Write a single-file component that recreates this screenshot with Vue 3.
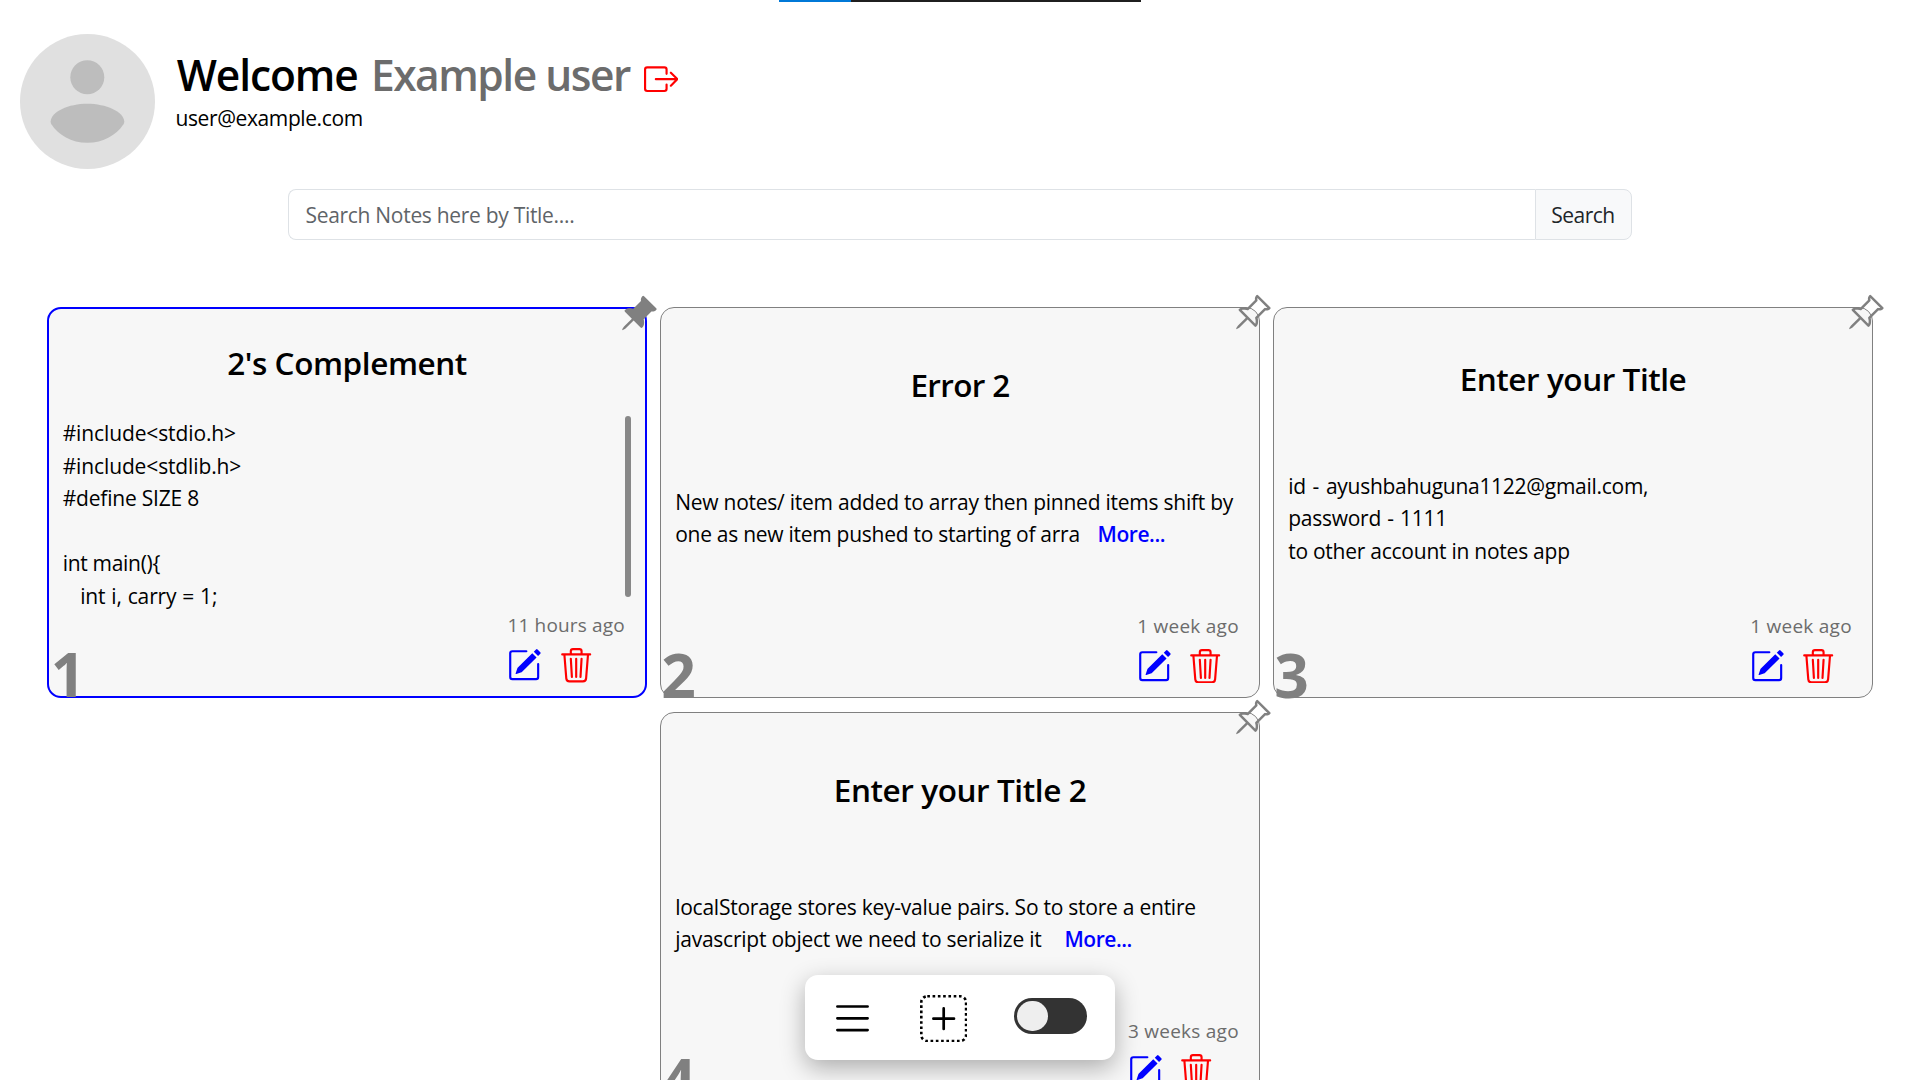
<script setup>
const notes = [
  {
    id: 1, title: "2's Complement", titleTrack: -0.42, pinned: true, date: '11 hours ago',
    lines: [
      { text: '#include<stdio.h>', track: -0.12 },
      { text: '#include<stdlib.h>', track: -0.13 },
      { text: '#define SIZE 8', track: -0.2 },
      { text: ' ', track: 0 },
      { text: 'int main(){', track: -0.3 },
      { text: '   int i, carry = 1;', track: -0.12, space: 0.5 },
    ],
  },
  {
    id: 2, title: 'Error 2', titleTrack: -0.65, pinned: false, date: '1 week ago',
    lines: [
      { text: 'New notes/ item added to array then pinned items shift by', track: -0.243 },
      { text: 'one as new item pushed to starting of arra', track: -0.27, more: true },
    ],
  },
  {
    id: 3, title: 'Enter your Title', titleTrack: -0.45, pinned: false, date: '1 week ago',
    lines: [
      { text: 'id - ayushbahuguna1122@gmail.com,', track: -0.28, space: 1.7 },
      { text: 'password - 1111', track: -0.25, space: 1 },
      { text: 'to other account in notes app', track: -0.247 },
    ],
  },
  {
    id: 4, title: 'Enter your Title 2', titleTrack: -0.42, pinned: false, date: '3 weeks ago',
    lines: [
      { text: 'localStorage stores key-value pairs. So to store a entire', track: -0.245 },
      { text: 'javascript object we need to serialize it ', track: -0.24, more: true },
    ],
  },
]
</script>

<template>
  <div class="page">
    <div class="loader"><span class="loader-done"></span></div>

    <header class="header">
      <svg class="avatar" viewBox="0 0 135 135">
        <circle cx="67.5" cy="67.5" r="67.5" fill="#e0e0e0" />
        <circle cx="67.3" cy="43.2" r="17" fill="#bdbdbd" />
        <path fill="#bdbdbd" d="M30.6 87.6C31.2 77.5 48.5 69.7 67.3 69.7s36.4 7.8 37 17.9c0 1-.3 1.8-.8 2.6C96.3 101 83.5 108.7 67.3 108.7S38.5 101 31.400 90.200c-.5-.8-.8-1.6-.8-2.6z" />
      </svg>
      <div class="who">
        <h1 class="greeting">
          <span class="hello">Welcome</span>
          <span class="name">Example user</span>
          <svg class="logout" viewBox="0 0 16 16" fill="currentColor">
            <path fill-rule="evenodd" d="M10 12.5a.5.5 0 0 1-.5.5h-8a.5.5 0 0 1-.5-.5v-9a.5.5 0 0 1 .5-.5h8a.5.5 0 0 1 .5.5v2a.5.5 0 0 0 1 0v-2A1.5 1.5 0 0 0 9.5 2h-8A1.5 1.5 0 0 0 0 3.5v9A1.5 1.5 0 0 0 1.5 14h8a1.5 1.5 0 0 0 1.5-1.5v-2a.5.5 0 0 0-1 0z" />
            <path fill-rule="evenodd" d="M15.854 8.354a.5.5 0 0 0 0-.708l-3-3a.5.5 0 0 0-.708.708L14.293 7.5H5.5a.5.5 0 0 0 0 1h8.793l-2.147 2.146a.5.5 0 0 0 .708.708z" />
          </svg>
        </h1>
        <p class="email">user@example.com</p>
      </div>
    </header>

    <form class="search" @submit.prevent>
      <input class="search-input" type="text" placeholder="Search Notes here by Title...." />
      <button class="search-button" type="submit">Search</button>
    </form>

    <main class="notes">
      <article v-for="n in notes" :key="n.id" class="card" :class="['card-' + n.id, { pinned: n.pinned }]">
        <svg class="pin" viewBox="0 0 16 16" fill="currentColor">
          <path v-if="n.pinned" d="M9.828.722a.5.5 0 0 1 .354.146l4.95 4.95a.5.5 0 0 1 0 .707c-.48.48-1.072.588-1.503.588-.177 0-.335-.018-.46-.039l-3.134 3.134a6 6 0 0 1 .16 1.013c.046.702-.032 1.687-.72 2.375a.5.5 0 0 1-.707 0l-2.829-2.828-3.182 3.182c-.195.195-1.219.902-1.414.707s.512-1.22.707-1.414l3.182-3.182-2.828-2.829a.5.5 0 0 1 0-.707c.688-.688 1.673-.767 2.375-.72a6 6 0 0 1 1.013.16l3.134-3.133a3 3 0 0 1-.04-.461c0-.43.108-1.022.589-1.503a.5.5 0 0 1 .353-.146" />
          <path v-else d="M9.828.722a.5.5 0 0 1 .354.146l4.95 4.95a.5.5 0 0 1 0 .707c-.48.48-1.072.588-1.503.588-.177 0-.335-.018-.46-.039l-3.134 3.134a6 6 0 0 1 .16 1.013c.046.702-.032 1.687-.72 2.375a.5.5 0 0 1-.707 0l-2.829-2.828-3.182 3.182c-.195.195-1.219.902-1.414.707s.512-1.22.707-1.414l3.182-3.182-2.828-2.829a.5.5 0 0 1 0-.707c.688-.688 1.673-.767 2.375-.72a6 6 0 0 1 1.013.16l3.134-3.133a3 3 0 0 1-.04-.461c0-.43.108-1.022.589-1.503a.5.5 0 0 1 .353-.146m.122 2.112v-.002zm0-.002v.002a.5.5 0 0 1-.122.51L6.293 6.878a.5.5 0 0 1-.511.12H5.78l-.014-.004a5 5 0 0 0-.288-.076 5 5 0 0 0-.765-.116c-.422-.028-.836.008-1.175.15l5.51 5.509c.141-.34.177-.753.149-1.175a5 5 0 0 0-.192-1.054l-.004-.013v-.001a.5.5 0 0 1 .12-.512l3.536-3.535a.5.5 0 0 1 .532-.115l.096.022c.087.017.208.034.344.034q.172.002.343-.04L9.927 2.028q-.042.172-.04.343a1.8 1.8 0 0 0 .062.46z" />
        </svg>
        <h2 class="title" :style="{ letterSpacing: n.titleTrack + 'px' }">{{ n.title }}</h2>
        <div class="body">
          <div v-for="(l, i) in n.lines" :key="i" class="line">
            <span :style="{ letterSpacing: l.track + 'px', wordSpacing: (l.space || 0) + 'px' }">{{ l.text }}</span><a v-if="l.more" class="more">More...</a>
          </div>
        </div>
        <span v-if="n.pinned" class="scroll-thumb"></span>
        <footer class="foot">
          <div class="meta">
            <span class="date">{{ n.date }}</span>
            <div class="actions">
              <svg class="edit" viewBox="0 0 16 16" fill="currentColor">
                <path d="M15.502 1.94a.5.5 0 0 1 0 .706L14.459 3.69l-2-2L13.502.646a.5.5 0 0 1 .707 0l1.293 1.293zm-1.75 2.456-2-2L4.939 9.21a.5.5 0 0 0-.121.196l-.805 2.414a.25.25 0 0 0 .316.316l2.414-.805a.5.5 0 0 0 .196-.12l6.813-6.814z" />
                <path fill-rule="evenodd" d="M1 13.5A1.5 1.5 0 0 0 2.5 15h11a1.5 1.5 0 0 0 1.5-1.5v-6a.5.5 0 0 0-1 0v6a.5.5 0 0 1-.5.5h-11a.5.5 0 0 1-.5-.5v-11a.5.5 0 0 1 .5-.5H9a.5.5 0 0 0 0-1H2.5A1.5 1.5 0 0 0 1 2.5z" />
              </svg>
              <svg class="trash" viewBox="0 0 16 16" fill="currentColor">
                <path d="M6.5 1h3a.5.5 0 0 1 .5.5v1H6v-1a.5.5 0 0 1 .5-.5M11 2.5v-1A1.5 1.5 0 0 0 9.5 0h-3A1.5 1.5 0 0 0 5 1.5v1H1.5a.5.5 0 0 0 0 1h.538l.853 10.66A2 2 0 0 0 4.885 16h6.23a2 2 0 0 0 1.994-1.84l.853-10.66h.538a.5.5 0 0 0 0-1zm1.958 1-.846 10.58a1 1 0 0 1-.997.92h-6.23a1 1 0 0 1-.997-.92L3.042 3.5zm-7.487 1a.5.5 0 0 1 .528.47l.5 8.5a.5.5 0 0 1-.998.06L5 5.03a.5.5 0 0 1 .47-.53Zm5.058 0a.5.5 0 0 1 .47.53l-.5 8.5a.5.5 0 1 1-.998-.06l.5-8.5a.5.5 0 0 1 .528-.47M8 4.5a.5.5 0 0 1 .5.5v8.5a.5.5 0 0 1-1 0V5a.5.5 0 0 1 .5-.5" />
              </svg>
            </div>
          </div>
        </footer>
        <span class="number">{{ n.id }}</span>
      </article>
    </main>

    <nav class="toolbar">
      <svg class="menu" viewBox="0 0 33 27">
        <path d="M1.4 1.5h30.2M1.4 13.3h30.2M1.4 25.1h30.2" stroke="#000" stroke-width="2.7" stroke-linecap="round" />
      </svg>
      <svg class="add" viewBox="0 0 47.4 47.4" fill="none" stroke="#000">
        <rect x="1.3" y="1.3" width="44.8" height="44.8" rx="6" stroke-width="2.6" stroke-dasharray="2.64 2.64" />
        <path d="M13.4 23.7H34M23.7 13.4V34" stroke-width="2.7" stroke-linecap="round" />
      </svg>
      <span class="toggle"><span class="knob"></span></span>
    </nav>
  </div>
</template>

<style>
body {
  margin: 0;
  background: #fff;
}
</style>

<style scoped>
.page {
  position: relative;
  width: 1920px;
  height: 1080px;
  overflow: hidden;
  background: #fff;
  color: #000;
  font-family: "Open Sans", "Noto Sans", sans-serif;
  font-size: 21px;
  line-height: 32.5px;
}
.loader {
  position: absolute;
  top: 0;
  left: 779px;
  width: 362px;
  height: 2px;
  background: #1f1f1f;
}
.loader-done {
  display: block;
  width: 72px;
  height: 2px;
  background: #0078d7;
}
.header {
  display: flex;
  padding: 34px 20px 0;
  height: 155px;
  box-sizing: border-box;
}
.avatar {
  width: 135px;
  height: 135px;
  flex: none;
}
.who {
  padding: 16.2px 0 0 20.5px;
}
.greeting {
  display: flex;
  margin: 0;
  padding-left: 1.2px;
  height: 51.5px;
  font-size: 42.5px;
  line-height: 50px;
  font-weight: 600;
}
.hello {
  letter-spacing: -1.1px;
  margin-right: 13.3px;
}
.name {
  letter-spacing: -1.48px;
  color: #6c6c6c;
}
.logout {
  width: 34.4px;
  height: 34.4px;
  margin: 11.5px 0 0 14px;
  color: red;
}
.email {
  margin: 0;
  letter-spacing: -0.4px;
}
.search {
  display: flex;
  width: 1344px;
  height: 51px;
  margin: 34px auto 0;
}
.search-input {
  flex: 1;
  box-sizing: border-box;
  min-width: 0;
  padding: 2px 16.5px 0;
  border: 1px solid #dee2e6;
  border-right: 0;
  border-radius: 8px 0 0 8px;
  font: inherit;
  letter-spacing: -0.3px;
  background: #fff;
  outline: none;
}
.search-input::placeholder {
  color: #5f6468;
  opacity: 1;
}
.search-button {
  box-sizing: border-box;
  width: 97px;
  padding: 2px 1px 0 0;
  border: 1px solid #dee2e6;
  border-radius: 0 8px 8px 0;
  background: #f8f9fa;
  color: #212529;
  font: inherit;
  letter-spacing: -0.5px;
}
.notes {
  display: flex;
  flex-wrap: wrap;
  justify-content: center;
  gap: 14px 13.3px;
  margin: 67px 40px 0;
}
.card {
  position: relative;
  box-sizing: border-box;
  display: flex;
  flex-direction: column;
  width: 599.7px;
  height: 391px;
  border: 1px solid gray;
  border-radius: 14px;
  background: #f7f7f7;
}
.card.pinned {
  border: 2px solid blue;
}
.title {
  box-sizing: border-box;
  height: 108.3px;
  margin: 0;
  padding-top: 57.5px;
  text-align: center;
  font-size: 31.5px;
  line-height: 38px;
  font-weight: 560;
}
.card-1 .title {
  height: 108.3px;
  padding-top: 34.5px;
}
.card-3 .title {
  padding-top: 51.5px;
}
.body {
  box-sizing: border-box;
  display: flex;
  flex-direction: column;
  justify-content: center;
  height: 195.5px;
  padding: 8.6px 14px 0;
}
.card-1 .body {
  justify-content: flex-start;
  height: 194px;
  padding-top: 0;
  padding-left: 13.5px;
}
.line {
  white-space: pre;
}
.more {
  margin-left: 17.8px;
  color: blue;
  font-weight: 600;
  letter-spacing: -0.45px;
}
.scroll-thumb {
  position: absolute;
  top: 107px;
  right: 13.5px;
  width: 6px;
  height: 181px;
  border-radius: 3px;
  background: #888;
}
.foot {
  display: flex;
  justify-content: flex-end;
  padding-right: 20px;
}
.date {
  display: block;
  height: 37px;
  font-size: 19px;
  line-height: 28.5px;
  letter-spacing: 0.25px;
  color: #6c6c6c;
}
.card-1 .date {
  letter-spacing: 0.16px;
}
.actions {
  display: flex;
  gap: 16.8px;
}
.edit,
.trash {
  width: 34.4px;
  height: 34.4px;
}
.edit {
  color: blue;
}
.trash {
  color: red;
}
.pin {
  position: absolute;
  top: -14.8px;
  right: -13.5px;
  width: 39.4px;
  height: 39.4px;
  color: gray;
}
.number {
  position: absolute;
  left: 0;
  bottom: -8px;
  color: gray;
  font-size: 60.5px;
  line-height: 61px;
  font-weight: 700;
}
.card-1 .number {
  left: 1.5px;
}
.toolbar {
  position: absolute;
  left: 805px;
  top: 975px;
  box-sizing: border-box;
  display: flex;
  align-items: flex-start;
  width: 310px;
  height: 85px;
  padding: 20px 28px 0 31px;
  border-radius: 13px;
  background: #fff;
  box-shadow: 0 8px 24px rgba(0, 0, 0, 0.3);
}
.menu {
  width: 33px;
  height: 27px;
  margin-top: 10px;
}
.add {
  width: 47.4px;
  height: 47.4px;
  margin: -0.3px 0 0 50.5px;
}
.toggle {
  box-sizing: border-box;
  width: 73.5px;
  height: 36px;
  margin: 3px 0 0 auto;
  padding: 2.7px 3.4px;
  border-radius: 18px;
  background: #333;
}
.knob {
  display: block;
  width: 30.7px;
  height: 30.7px;
  border-radius: 50%;
  background: #eee;
}
</style>
